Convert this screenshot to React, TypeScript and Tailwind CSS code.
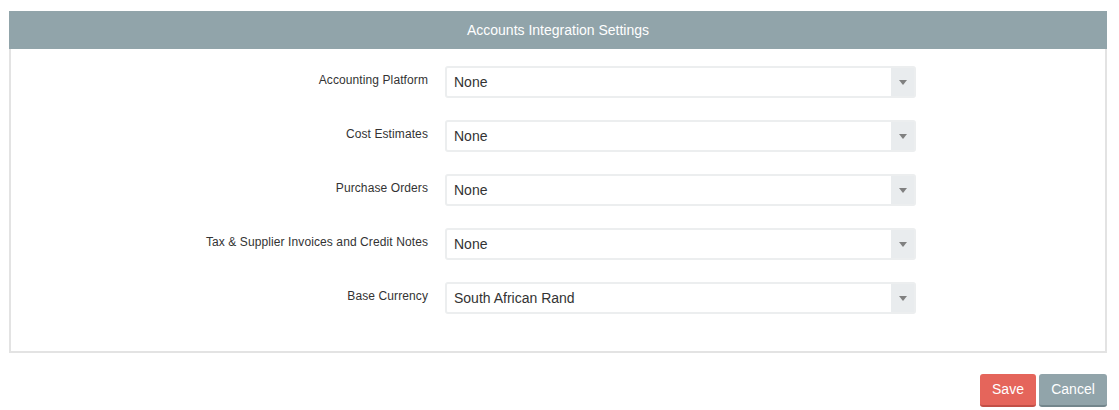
import { ChangeEvent, useState } from "react"

interface SettingRow {
	key: string
	label: string
	options: string[]
}

const rows: SettingRow[] = [
	{ key: "platform", label: "Accounting Platform", options: ["None", "Xero", "Sage", "QuickBooks"] },
	{ key: "estimates", label: "Cost Estimates", options: ["None", "Export"] },
	{ key: "orders", label: "Purchase Orders", options: ["None", "Export"] },
	{ key: "invoices", label: "Tax & Supplier Invoices and Credit Notes", options: ["None", "Export"] },
	{ key: "currency", label: "Base Currency", options: ["South African Rand", "US Dollar", "Euro", "British Pound"] }
]

const SelectBox = ({ value, options, onChange }: { value: string; options: string[]; onChange: (v: string) => void }) => (
	<div className="relative flex h-[32px] w-[471px] rounded-[3px] border-2 border-[#eceeef] bg-white">
		<select
			className="h-full flex-1 appearance-none bg-transparent pl-[7px] text-[14px] text-[#333] outline-none"
			value={value}
			onChange={(e: ChangeEvent<HTMLSelectElement>) => onChange(e.target.value)}
		>
			{options.map((o) => (
				<option key={o} value={o}>
					{o}
				</option>
			))}
		</select>
		<div className="pointer-events-none flex w-[23px] items-center justify-center bg-[#e9ecee]">
			<div className="h-0 w-0 border-x-[4px] border-t-[5px] border-x-transparent border-t-[#808080]" />
		</div>
	</div>
)

export default function App() {
	const [values, setValues] = useState<Record<string, string>>(
		Object.fromEntries(rows.map((r) => [r.key, r.options[0]]))
	)

	return (
		<div className="min-h-[410px] bg-white px-[9px] pt-[11px] pr-[12px] font-['Liberation_Sans',Arial,sans-serif]">
			<div className="flex h-[38px] items-center justify-center bg-[#91a4aa] text-[14px] text-white">
				Accounts Integration Settings
			</div>
			<div className="flex flex-col gap-[22px] border-2 border-t-0 border-[#e3e3e3] pt-[17px] pb-[37px]">
				{rows.map((row) => (
					<div key={row.key} className="flex items-start">
						<div className="w-[417px] pt-[5px] text-right text-[12px] tracking-[0.1px] text-[#333]">{row.label}</div>
						<div className="ml-[17px]">
							<SelectBox
								value={values[row.key]}
								options={row.options}
								onChange={(v) => setValues({ ...values, [row.key]: v })}
							/>
						</div>
					</div>
				))}
			</div>
			<div className="mt-[21px] flex justify-end gap-[3px]">
				<button className="h-[33px] w-[56px] rounded-[3px] border-b-2 border-[#c24f46] bg-[#e5655b] text-[14px] text-white">
					Save
				</button>
				<button className="h-[33px] w-[68px] rounded-[3px] border-b-2 border-[#73868c] bg-[#91a4aa] text-[14px] text-white">
					Cancel
				</button>
			</div>
		</div>
	)
}
